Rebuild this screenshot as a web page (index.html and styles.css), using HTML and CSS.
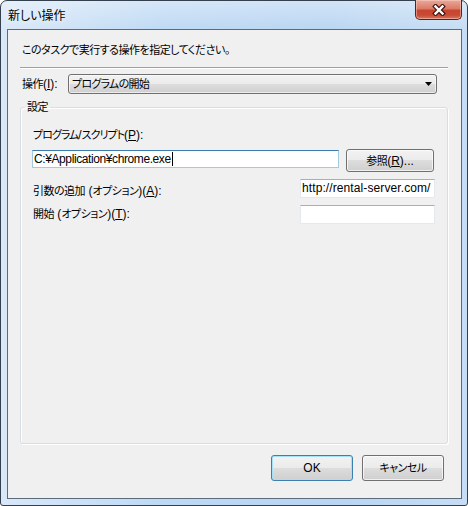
FILE: index.html
```html
<!DOCTYPE html>
<html lang="ja">
<head>
<meta charset="utf-8">
<title>新しい操作</title>
<link rel="stylesheet" href="styles.css">
</head>
<body>
<div class="window">
  <div class="titlebar">
    <span class="title">新しい操作</span>
    <div class="close">
      <svg width="14" height="12" viewBox="0 0 14 12">
        <path d="M3.5 2.5 L10.5 9.5 M10.5 2.5 L3.5 9.5" stroke="#3b1610" stroke-width="4.6" stroke-linecap="square" fill="none"/>
        <path d="M3.5 2.5 L10.5 9.5 M10.5 2.5 L3.5 9.5" stroke="#ffffff" stroke-width="2.4" stroke-linecap="square" fill="none"/>
      </svg>
    </div>
  </div>
  <div class="client">
    <p class="intro"><span class="ja">このタスクで実行する操作を指定してください。</span></p>
    <div class="sep"></div>
    <div class="action-row">
      <span class="action-label"><span class="ja">操作</span>(<u>I</u>):</span>
      <div class="combo">
        <span class="combo-text"><span class="ja tight">プログラムの開始</span></span>
        <svg class="arrow" width="7" height="4" viewBox="0 0 7 4"><polygon points="0,0 7,0 3.5,4" fill="#000"/></svg>
      </div>
    </div>
    <fieldset class="group">
      <legend class="group-title"><span class="ja">設定</span></legend>
      <div class="field-label"><span class="ja tighter">プログラム</span>/<span class="ja tighter">スクリプト</span>(<u>P</u>):</div>
      <div class="prog-row">
        <div class="input focused">C:¥Application¥chrome.exe<span class="caret"></span></div>
        <div class="btn browse"><span class="ja">参照</span>(<u>R</u>)...</div>
      </div>
      <div class="opt-row first">
        <span class="opt-label"><span class="ja">引数の追加</span> (<span class="ja">オプション</span>)(<u>A</u>):</span>
        <div class="input small url">http://rental-server.com/</div>
      </div>
      <div class="opt-row second">
        <span class="opt-label"><span class="ja">開始</span> (<span class="ja">オプション</span>)(<u>T</u>):</span>
        <div class="input small"></div>
      </div>
    </fieldset>
    <div class="buttons">
      <div class="btn ok">OK</div>
      <div class="btn cancel"><span class="ja">キャンセル</span></div>
    </div>
  </div>
</div>
</body>
</html>
```
FILE: styles.css
```css
* { box-sizing: border-box; }
html, body { margin: 0; padding: 0; }
body {
  width: 468px;
  height: 506px;
  background: #ffffff;
  font-family: "Liberation Sans", "Noto Sans CJK JP", sans-serif;
  font-size: 12px;
  color: #000;
}
u { text-decoration: underline; text-underline-offset: 1px; }
.ja {
  font-size: 11px;
  font-feature-settings: "palt";
  letter-spacing: -0.5px;
}
.ja.tight { letter-spacing: -0.75px; }
.ja.tighter { letter-spacing: -1px; }

.window {
  width: 468px;
  height: 506px;
  border: 1px solid #34404d;
  border-radius: 7px 7px 3px 3px;
  background:
    linear-gradient(to bottom, rgba(255,255,255,0.35), rgba(255,255,255,0) 30px),
    linear-gradient(to right, #d9e8f8 0%, #bed9f4 35%, #b9d5f2 70%, #c6ddf4 100%);
  padding: 0 5px 6px 6px;
  display: flex;
  flex-direction: column;
}

.titlebar {
  height: 28px;
  display: flex;
  align-items: flex-start;
}
.title {
  margin: 7px 0 0 1px;
  line-height: 16px;
  font-size: 12px;
  font-feature-settings: "palt";
  color: #000;
  text-shadow: 0 0 6px rgba(255,255,255,0.9);
}
.close {
  margin-left: auto;
  margin-top: -1px;
  width: 47px;
  height: 20px;
  border: 1px solid #5a2219;
  border-top: none;
  border-radius: 0 0 5px 5px;
  background: linear-gradient(to bottom, #e9a99a 0%, #dc7c68 45%, #c8452f 55%, #c74b35 80%, #d9785f 100%);
  box-shadow: inset 0 0 0 1px rgba(255,220,210,0.45);
  display: flex;
  align-items: center;
  justify-content: center;
}

.client {
  flex: 1;
  border: 1px solid #5b6b7e;
  background: #f0f0f0;
  padding: 0 13px 0 12px;
  display: flex;
  flex-direction: column;
}

.intro {
  margin: 12px 0 0 0;
  padding-left: 2px;
  line-height: 16px;
}
.sep {
  margin-top: 9px;
  height: 2px;
  border-top: 1px solid #a0a0a0;
  border-bottom: 1px solid #ffffff;
}

.action-row {
  margin-top: 5px;
  height: 20px;
  display: flex;
  align-items: center;
}
.action-label {
  width: 48px;
  padding-left: 2px;
  line-height: 16px;
}
.combo {
  flex: 1;
  margin-right: 11px;
  height: 20px;
  border: 1px solid #707070;
  border-radius: 3px;
  background: linear-gradient(to bottom, #f2f2f2 0%, #ebebeb 50%, #dddddd 50%, #cfcfcf 100%);
  box-shadow: inset 0 0 0 1px rgba(255,255,255,0.6);
  display: flex;
  align-items: center;
  padding: 0 4px 0 3px;
}
.combo-text { flex: 1; line-height: 16px; }
.arrow { display: block; }

.group {
  flex: 1;
  margin: 5px 0 0 0;
  min-width: 0;
  border: 1px solid #d5dfe5;
  border-radius: 3px;
  box-shadow: 1px 1px 0 #ffffff, inset 1px 1px 0 #ffffff;
  padding: 12px 12px 0 11px;
}
.group-title {
  margin-left: -7px;
  padding: 0 2px;
  line-height: 16px;
}

.field-label {
  padding-left: 1px;
  line-height: 16px;
}
.prog-row {
  margin-top: 6px;
  display: flex;
  align-items: flex-start;
}
.input {
  height: 19px;
  background: #fff;
  border: 1px solid #e3e9ef;
  border-top-color: #abadb3;
  padding: 0 2px;
  line-height: 17px;
  white-space: nowrap;
  overflow: hidden;
  display: flex;
  align-items: center;
}
.input.focused {
  flex: 1;
  margin-top: 1px;
  height: 18px;
  border-color: #a4c9e3;
  border-top-color: #3d7bad;
  padding-left: 1px;
  letter-spacing: -0.4px;
}
.caret {
  display: inline-block;
  width: 1px;
  height: 14px;
  background: #000;
  margin-left: 1px;
}
.btn {
  height: 23px;
  border: 1px solid #707070;
  border-radius: 3px;
  background: linear-gradient(to bottom, #f2f2f2 0%, #ebebeb 50%, #dddddd 50%, #cfcfcf 100%);
  box-shadow: inset 0 0 0 1px rgba(255,255,255,0.7);
  display: flex;
  align-items: center;
  justify-content: center;
  line-height: 16px;
}
.browse {
  width: 88px;
  margin-left: 7px;
  margin-right: 1px;
}

.opt-row {
  display: flex;
  align-items: flex-start;
}
.opt-row.first { margin-top: 7px; }
.opt-row.second { margin-top: 6px; }
.opt-label {
  flex: 1;
  padding-left: 1px;
  line-height: 16px;
}
.opt-row.first .opt-label { margin-top: 4px; }
.opt-row.second .opt-label { margin-top: 1px; }
.input.small {
  width: 135px;
  padding-left: 1px;
}
.input.url { letter-spacing: 0.1px; }

.buttons {
  margin: 11px 4px 17px 0;
  display: flex;
  justify-content: flex-end;
  gap: 9px;
}
.buttons .btn {
  width: 82px;
  height: 26px;
}
.buttons .ok {
  border-color: #3c7fb1;
  box-shadow: inset 0 0 0 1px #a6e1f8;
}
```
